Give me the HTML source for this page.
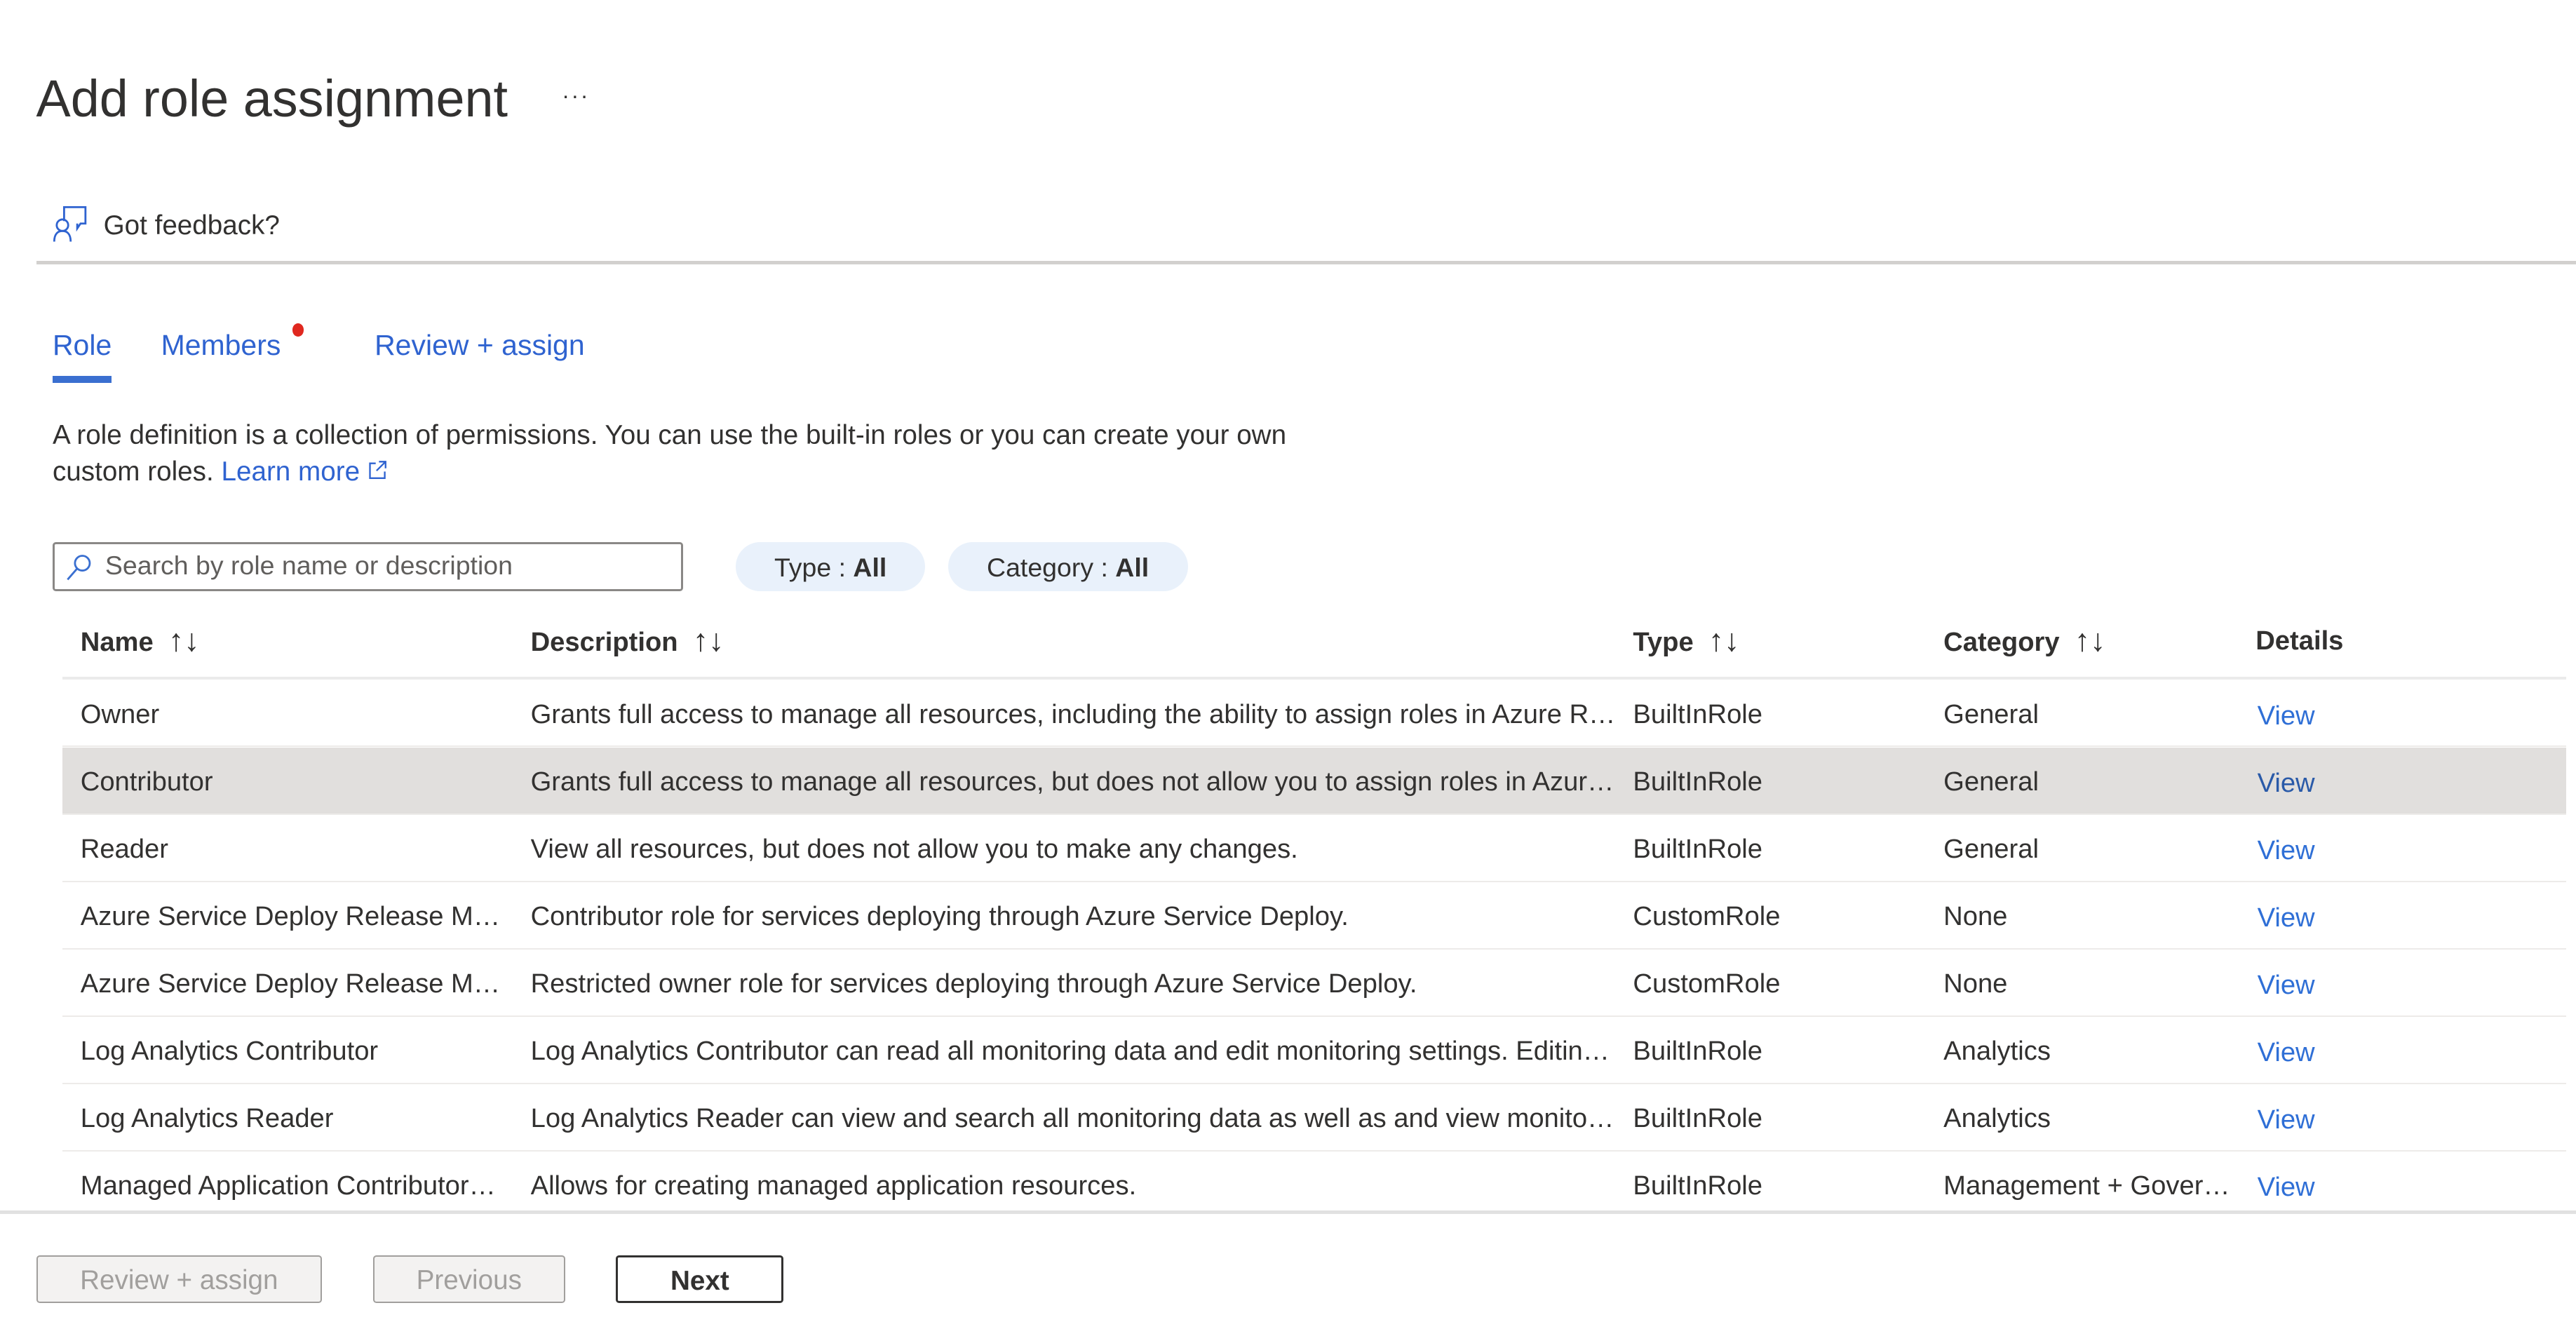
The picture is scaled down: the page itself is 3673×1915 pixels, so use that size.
<!DOCTYPE html>
<html><head><meta charset="utf-8"><style>
html,body{margin:0;padding:0;background:#fff;width:3673px;height:1915px;overflow:hidden}
#w{zoom:2.3425;position:relative;width:1568px;height:818px;font-family:"Liberation Sans",sans-serif;color:#323130;font-size:16.3px}
.a{position:absolute;white-space:nowrap}
.blue{color:#2f63d0}
.row{position:absolute;left:38px;width:1524px;height:40px;border-bottom:1px solid #edebe9}
.row div{position:absolute;top:0;line-height:42px;white-space:nowrap;overflow:hidden;text-overflow:ellipsis}
.c1{left:11px;width:256px}.c2{left:285px;width:662px}.c3{left:956px}.c4{left:1145px;width:176px}.c5{left:1336px;color:#2f6fd6;top:1px!important}
.hd{font-weight:bold;color:#323130}
.ar{font-weight:normal;font-size:19px}
.btn{position:absolute;top:764px;height:29px;line-height:29px;text-align:center;border-radius:2px;font-size:16.5px;box-sizing:border-box}
</style></head><body><div id="w">
<div class="a" style="left:22px;top:42px;font-size:31.5px;color:#323130">Add role assignment</div>
<div class="a" style="left:342px;top:50px;font-size:14px;letter-spacing:1px">···</div>
<svg class="a" style="left:32px;top:125px" width="22" height="23" viewBox="0 0 22 23" fill="none" stroke="#2f63d0" stroke-width="1.2"><path d="M7 9.5V1h13v10h-3l-2 3v-3"/><circle cx="6" cy="12" r="3.5"/><path d="M1 22c0-5 2.5-6.5 5-6.5s5 1.5 5 6.5"/></svg>
<div class="a" style="left:63px;top:128px;font-size:16.5px">Got feedback?</div>
<div class="a" style="left:22px;top:159px;width:1546px;height:2px;background:#d2d0ce"></div>
<div class="a blue" style="left:32px;top:200px;font-size:17.5px">Role</div>
<div class="a" style="left:32px;top:229px;width:36px;height:4px;background:#3a6fd0"></div>
<div class="a blue" style="left:98px;top:200px;font-size:17.5px">Members</div>
<div class="a" style="left:178px;top:197px;width:7px;height:8px;border-radius:50%;background:#e0281f"></div>
<div class="a blue" style="left:228px;top:200px;font-size:17.5px">Review + assign</div>
<div class="a" style="left:32px;top:254px;font-size:16.5px;line-height:22px">A role definition is a collection of permissions. You can use the built-in roles or you can create your own<br>custom roles. <span class="blue">Learn more</span> <svg width="12" height="12" viewBox="0 0 12 12" fill="none" stroke="#2f63d0" stroke-width="1"><path d="M5 2H1.5v9h9V7M7 1h4v4M11 1L5.5 6.5"/></svg></div>
<div class="a" style="left:32px;top:330px;width:384px;height:30px;border:1.3px solid #8a8886;border-radius:2px;box-sizing:border-box"></div>
<svg class="a" style="left:40px;top:337px" width="16" height="17" viewBox="0 0 16 17" fill="none" stroke="#3a6fd0" stroke-width="1.2"><circle cx="10" cy="6" r="4.5"/><path d="M6.8 9.3L1 16"/></svg>
<div class="a" style="left:64px;top:335px;font-size:16px;color:#605e5c">Search by role name or description</div>
<div class="a" style="left:448px;top:330px;width:115px;height:30px;border-radius:15px;background:#e9f1fb;text-align:center;line-height:31px;font-size:16px">Type : <b>All</b></div>
<div class="a" style="left:577px;top:330px;width:146px;height:30px;border-radius:15px;background:#e9f1fb;text-align:center;line-height:31px;font-size:16px">Category : <b>All</b></div>
<div class="row hd" style="top:371px;height:41px;border-bottom:2px solid #ebebeb"><div class="c1" style="line-height:38px">Name &nbsp;<span class="ar">↑↓</span></div><div class="c2" style="line-height:38px">Description &nbsp;<span class="ar">↑↓</span></div><div class="c3" style="line-height:38px">Type &nbsp;<span class="ar">↑↓</span></div><div class="c4" style="line-height:38px">Category &nbsp;<span class="ar">↑↓</span></div><div style="left:1335px;line-height:38px">Details</div></div>
<div class="row" style="top:414px"><div class="c1">Owner</div><div class="c2">Grants full access to manage all resources, including the ability to assign roles in Azure RBAC.</div><div class="c3">BuiltInRole</div><div class="c4">General</div><div class="c5">View</div></div>
<div class="row" style="top:455px;background:#e1dfdd"><div class="c1">Contributor</div><div class="c2">Grants full access to manage all resources, but does not allow you to assign roles in Azure RBAC.</div><div class="c3">BuiltInRole</div><div class="c4">General</div><div class="c5" style="color:#2a5aa8">View</div></div>
<div class="row" style="top:496px"><div class="c1">Reader</div><div class="c2">View all resources, but does not allow you to make any changes.</div><div class="c3">BuiltInRole</div><div class="c4">General</div><div class="c5">View</div></div>
<div class="row" style="top:537px"><div class="c1">Azure Service Deploy Release Management</div><div class="c2">Contributor role for services deploying through Azure Service Deploy.</div><div class="c3">CustomRole</div><div class="c4">None</div><div class="c5">View</div></div>
<div class="row" style="top:578px"><div class="c1">Azure Service Deploy Release Management</div><div class="c2">Restricted owner role for services deploying through Azure Service Deploy.</div><div class="c3">CustomRole</div><div class="c4">None</div><div class="c5">View</div></div>
<div class="row" style="top:619px"><div class="c1">Log Analytics Contributor</div><div class="c2">Log Analytics Contributor can read all monitoring data and edit monitoring settings. Editing monitoring settings</div><div class="c3">BuiltInRole</div><div class="c4">Analytics</div><div class="c5">View</div></div>
<div class="row" style="top:660px"><div class="c1">Log Analytics Reader</div><div class="c2">Log Analytics Reader can view and search all monitoring data as well as and view monitoring settings</div><div class="c3">BuiltInRole</div><div class="c4">Analytics</div><div class="c5">View</div></div>
<div class="row" style="top:701px;border-bottom:none"><div class="c1">Managed Application Contributor Role</div><div class="c2">Allows for creating managed application resources.</div><div class="c3">BuiltInRole</div><div class="c4">Management + Governance</div><div class="c5">View</div></div>
<div class="a" style="left:0;top:737px;width:1568px;height:2px;background:#e1e1e1"></div>
<div class="btn" style="left:22px;width:174px;background:#f3f2f1;border:1.2px solid #a19f9d;color:#a19f9d">Review + assign</div>
<div class="btn" style="left:227px;width:117px;background:#f3f2f1;border:1.2px solid #a19f9d;color:#a19f9d">Previous</div>
<div class="btn" style="left:375px;width:102px;background:#fff;border:1.3px solid #323130;color:#323130;font-weight:bold">Next</div>
</div></body></html>
